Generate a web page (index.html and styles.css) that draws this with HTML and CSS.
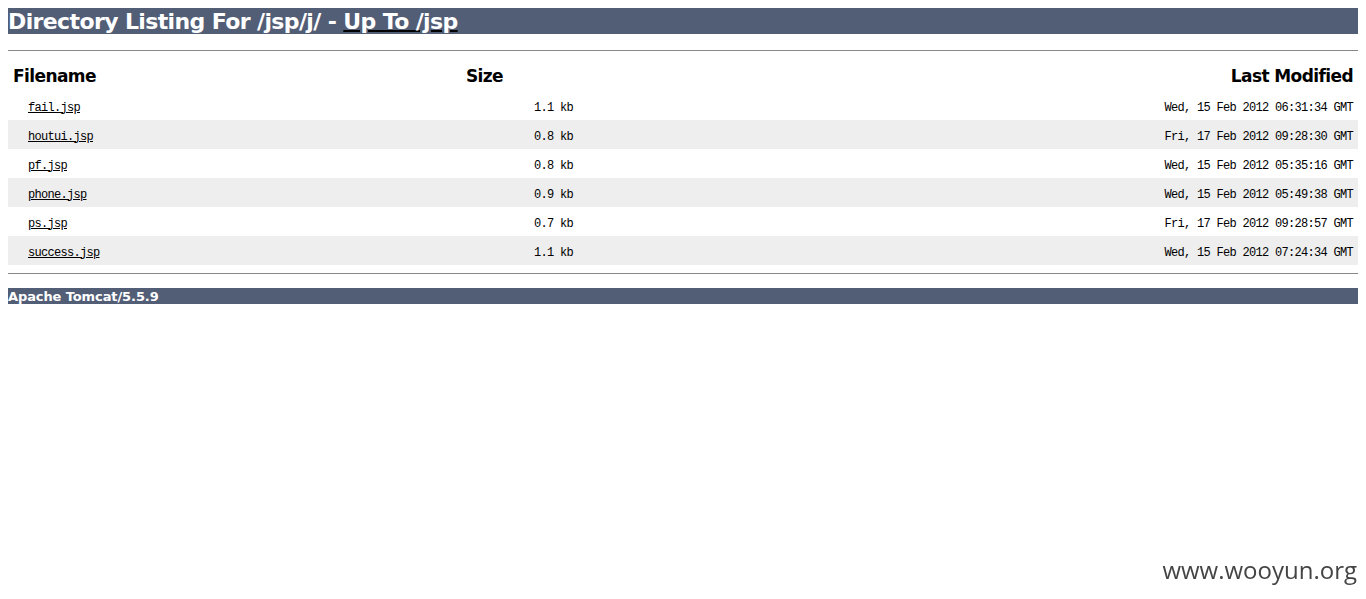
FILE: index.html
```html
<!DOCTYPE html>
<html>
<head>
<meta charset="utf-8">
<title>Directory Listing For /jsp/j/</title>
<link rel="stylesheet" href="styles.css">
</head>
<body>
<h1 class="title">Directory Listing For /jsp/j/ - <a class="up" href="#"><b class="upb">Up To /jsp</b></a></h1>
<hr class="rule">
<table class="listing">
  <colgroup><col class="c1"><col class="c2"><col class="c3"></colgroup>
  <tr class="head">
    <td class="left">Filename</td>
    <td class="center">Size</td>
    <td class="right">Last Modified</td>
  </tr>
  <tr>
    <td class="left name"><a href="#">fail.jsp</a></td>
    <td class="right mono">1.1 kb</td>
    <td class="right mono">Wed, 15 Feb 2012 06:31:34 GMT</td>
  </tr>
  <tr class="alt">
    <td class="left name"><a href="#">houtui.jsp</a></td>
    <td class="right mono">0.8 kb</td>
    <td class="right mono">Fri, 17 Feb 2012 09:28:30 GMT</td>
  </tr>
  <tr>
    <td class="left name"><a href="#">pf.jsp</a></td>
    <td class="right mono">0.8 kb</td>
    <td class="right mono">Wed, 15 Feb 2012 05:35:16 GMT</td>
  </tr>
  <tr class="alt">
    <td class="left name"><a href="#">phone.jsp</a></td>
    <td class="right mono">0.9 kb</td>
    <td class="right mono">Wed, 15 Feb 2012 05:49:38 GMT</td>
  </tr>
  <tr>
    <td class="left name"><a href="#">ps.jsp</a></td>
    <td class="right mono">0.7 kb</td>
    <td class="right mono">Fri, 17 Feb 2012 09:28:57 GMT</td>
  </tr>
  <tr class="alt">
    <td class="left name"><a href="#">success.jsp</a></td>
    <td class="right mono">1.1 kb</td>
    <td class="right mono">Wed, 15 Feb 2012 07:24:34 GMT</td>
  </tr>
</table>
<hr class="rule rule2">
<h3 class="footer">Apache Tomcat/5.5.9</h3>
<div class="watermark">www.wooyun.org</div>
</body>
</html>
```
FILE: styles.css
```css
html, body {
  margin: 0;
  padding: 0;
}
body {
  margin: 8px;
  background: #fff;
  color: #000;
  font-family: "DejaVu Sans", "Liberation Sans", sans-serif;
}
.title {
  margin: 0 0 16px 0;
  height: 26px;
  line-height: 28px;
  font-size: 22px;
  font-weight: bold;
  color: #fff;
  background: #525D76;
  letter-spacing: -0.62px;
  white-space: nowrap;
}
.up {
  color: #000;
  text-decoration: underline;
  text-decoration-thickness: 2px;
}
.upb {
  color: #fff;
}
.rule {
  margin: 0;
  border: 0;
  height: 1px;
  background: #888;
}
.rule2 {
  margin-top: 8px;
}
.listing {
  width: 100%;
  border-collapse: collapse;
  margin-top: 7px;
}
.c1 { width: 383px; }
.c2 { width: 187px; }
.listing td {
  padding: 4px 5px 0 5px;
  height: 25px;
  vertical-align: middle;
}
.listing .head td {
  height: 30px;
  padding-top: 3px;
  font-size: 17px;
  font-weight: bold;
  letter-spacing: -0.6px;
}
.alt {
  background: #eeeeee;
}
.left { text-align: left; }
.center { text-align: center; }
.right { text-align: right; }
.mono, .name {
  font-family: "Liberation Mono", "DejaVu Sans Mono", monospace;
  font-size: 12px;
  letter-spacing: -0.7px;
}
.listing td.name {
  padding-left: 20px;
}
.name a {
  color: #000;
}
.footer {
  margin: 14px 0 0 0;
  height: 16px;
  line-height: 17px;
  font-size: 13px;
  font-weight: bold;
  color: #fff;
  background: #525D76;
  letter-spacing: -0.1px;
}
.watermark {
  position: fixed;
  right: 9px;
  top: 553px;
  font-family: "Open Sans", "Noto Sans", sans-serif;
  font-size: 24px;
  color: #444;
}
```
